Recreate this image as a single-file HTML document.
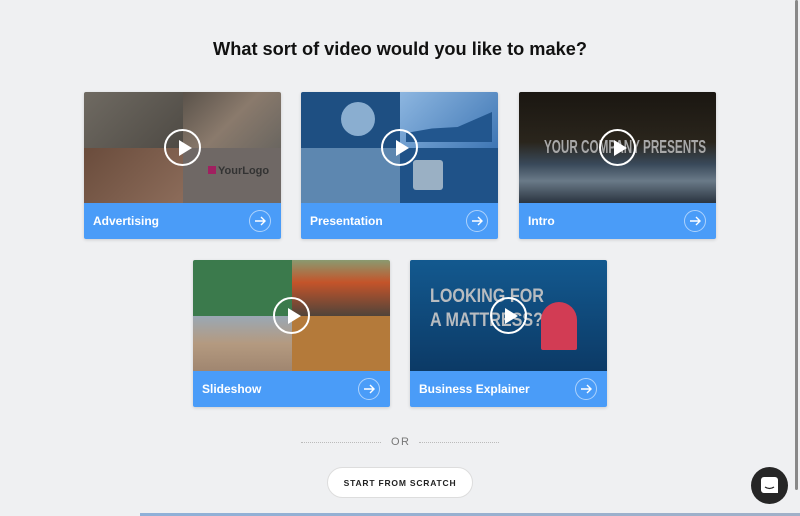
<!DOCTYPE html>
<html><head><meta charset="utf-8"><style>
*{margin:0;padding:0;box-sizing:border-box}
body{width:800px;height:516px;background:#eff0f2;font-family:"Liberation Sans",sans-serif;position:relative;overflow:hidden}
h1{position:absolute;top:39px;left:0;width:800px;text-align:center;font-size:18.2px;font-weight:bold;color:#111}
.card{position:absolute;width:197px;height:147px;border-radius:2px;overflow:hidden;box-shadow:0 1px 3px rgba(0,0,0,.15)}
.img{position:absolute;left:0;top:0;width:197px;height:111px;overflow:hidden}
.bar{position:absolute;left:0;top:111px;width:197px;height:36px;background:#4a9cf8;color:#fff;font-weight:bold;font-size:12px;line-height:36px;padding-left:9px}
.arr{position:absolute;right:10px;top:7px;width:22px;height:22px;border:1.5px solid rgba(255,255,255,.55);border-radius:50%}
.arr svg{position:absolute;left:4px;top:4px}
.play{position:absolute;left:80px;top:37px;width:37px;height:37px;border:2px solid #fff;border-radius:50%}
.play:after{content:"";position:absolute;left:13px;top:9px;border-left:13px solid #fff;border-top:8px solid transparent;border-bottom:8px solid transparent}
.q{position:absolute;white-space:nowrap}
</style></head><body>
<h1>What sort of video would you like to make?</h1>

<div class="card" style="left:84px;top:92px">
 <div class="img">
  <div class="q" style="left:0;top:0;width:99px;height:56px;background:linear-gradient(135deg,#6f6a62,#4e4a44)"></div>
  <div class="q" style="left:99px;top:0;width:98px;height:56px;background:linear-gradient(135deg,#5a524a,#8a7a6c 50%,#6a6660)"></div>
  <div class="q" style="left:0;top:56px;width:99px;height:55px;background:linear-gradient(135deg,#6a4c3c,#8c6c5a)"></div>
  <div class="q" style="left:99px;top:56px;width:98px;height:55px;background:#6f6865"></div>
  <div class="q" style="left:124px;top:73px;font-size:11px;color:#333;font-weight:bold"><span style="display:inline-block;width:8px;height:8px;background:#a02060;margin-right:2px"></span>YourLogo</div>
  <div class="play"></div>
 </div>
 <div class="bar">Advertising<div class="arr"><svg width="12" height="12" viewBox="0 0 12 12"><path d="M1 6H11M7 2L11 6L7 10" stroke="#fff" stroke-width="1.4" fill="none"/></svg></div></div>
</div>

<div class="card" style="left:301px;top:92px">
 <div class="img">
  <div class="q" style="left:0;top:0;width:99px;height:56px;background:#1e4f82"></div>
  <div class="q" style="left:40px;top:10px;width:34px;height:34px;border-radius:50%;background:#8aaed0"></div>
  <div class="q" style="left:99px;top:0;width:98px;height:56px;background:linear-gradient(135deg,#8db6e0,#3e76b4)"></div>
  <div class="q" style="left:105px;top:20px;width:86px;height:30px;background:#22568e;clip-path:polygon(0 70%,30% 55%,60% 50%,100% 0,100% 100%,0 100%)"></div>
  <div class="q" style="left:0;top:56px;width:99px;height:55px;background:#5d87b0"></div>
  <div class="q" style="left:99px;top:56px;width:98px;height:55px;background:#1f5288"></div>
  <div class="q" style="left:112px;top:68px;width:30px;height:30px;background:#9ab0c4;border-radius:3px"></div>
  <div class="play"></div>
 </div>
 <div class="bar">Presentation<div class="arr"><svg width="12" height="12" viewBox="0 0 12 12"><path d="M1 6H11M7 2L11 6L7 10" stroke="#fff" stroke-width="1.4" fill="none"/></svg></div></div>
</div>

<div class="card" style="left:519px;top:92px">
 <div class="img" style="background:linear-gradient(180deg,#1a1611 0%,#2a251c 45%,#39495a 65%,#6a7a88 80%,#2a3440 100%)">
  <div class="q" style="left:25px;top:45px;font-size:18px;font-weight:bold;color:#a8a8a8;transform:scaleX(.65);transform-origin:left">YOUR COMPANY PRESENTS</div>
  <div class="play"></div>
 </div>
 <div class="bar">Intro<div class="arr"><svg width="12" height="12" viewBox="0 0 12 12"><path d="M1 6H11M7 2L11 6L7 10" stroke="#fff" stroke-width="1.4" fill="none"/></svg></div></div>
</div>

<div class="card" style="left:193px;top:260px">
 <div class="img">
  <div class="q" style="left:0;top:0;width:99px;height:56px;background:#3b7a4c"></div>
  <div class="q" style="left:99px;top:0;width:98px;height:56px;background:linear-gradient(180deg,#8a9a70,#c4542a 40%,#50443a)"></div>
  <div class="q" style="left:0;top:56px;width:99px;height:55px;background:linear-gradient(180deg,#9aa8b4,#b49a80 50%,#a08670)"></div>
  <div class="q" style="left:99px;top:56px;width:98px;height:55px;background:#b47a3a"></div>
  <div class="play"></div>
 </div>
 <div class="bar">Slideshow<div class="arr"><svg width="12" height="12" viewBox="0 0 12 12"><path d="M1 6H11M7 2L11 6L7 10" stroke="#fff" stroke-width="1.4" fill="none"/></svg></div></div>
</div>

<div class="card" style="left:410px;top:260px">
 <div class="img" style="background:linear-gradient(180deg,#13598f,#0c3a66)">
  <div class="q" style="left:20px;top:25px;font-size:19px;font-weight:bold;color:#b8bcc0;line-height:24px;transform:scaleX(.85);transform-origin:left">LOOKING FOR<br>A MATTRESS?</div>
  <div class="q" style="left:131px;top:42px;width:36px;height:48px;background:#d23c54;border-radius:18px 18px 2px 2px"></div>
  <div class="play"></div>
 </div>
 <div class="bar">Business Explainer<div class="arr"><svg width="12" height="12" viewBox="0 0 12 12"><path d="M1 6H11M7 2L11 6L7 10" stroke="#fff" stroke-width="1.4" fill="none"/></svg></div></div>
</div>

<div class="q" style="left:301px;top:442px;width:80px;border-top:1px dotted #bbb"></div>
<div class="q" style="left:419px;top:442px;width:80px;border-top:1px dotted #bbb"></div>
<div class="q" style="left:391px;top:436px;font-size:11px;color:#777;letter-spacing:1.5px">OR</div>

<div class="q" style="left:327px;top:467px;width:146px;height:31px;background:#fff;border:1px solid #ddd;border-radius:16px;text-align:center;font-size:8.5px;font-weight:bold;letter-spacing:.8px;line-height:30px;color:#222">START FROM SCRATCH</div>

<div class="q" style="left:751px;top:467px;width:37px;height:37px;border-radius:50%;background:#262626"></div>
<div class="q" style="left:761px;top:477px;width:17px;height:16px;background:#fff;border-radius:3px 3px 0 3px"></div>
<svg class="q" style="left:761px;top:477px" width="17" height="17"><path d="M4 10Q8.5 13 13 10" stroke="#262626" stroke-width="1.3" fill="none"/></svg>

<div class="q" style="left:795px;top:0;width:3px;height:490px;background:#888;border-radius:2px"></div>
<div class="q" style="left:140px;top:513px;width:660px;height:3px;background:linear-gradient(90deg,#8fb0d8,#a0b0c8)"></div>
</body></html>
